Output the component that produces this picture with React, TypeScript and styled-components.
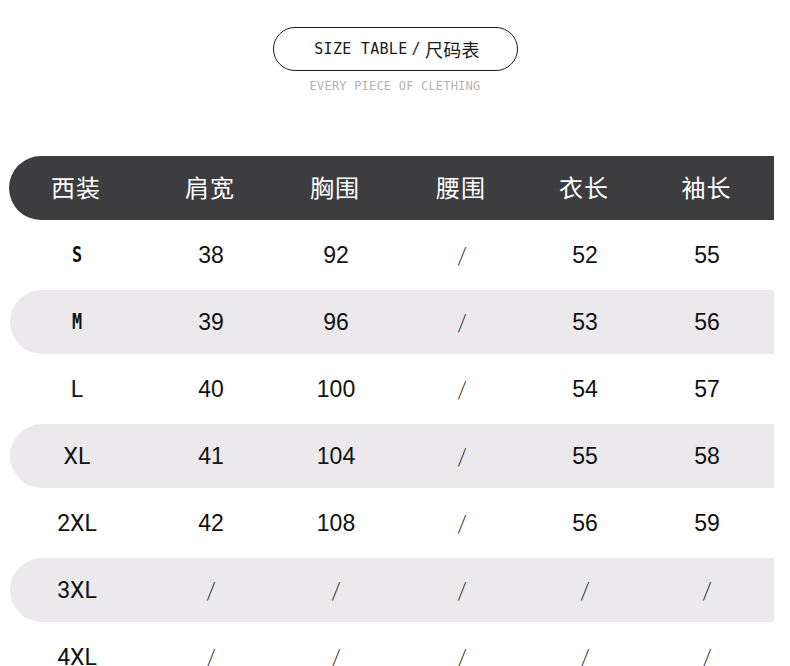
import React from "react";
import styled, { createGlobalStyle } from "styled-components";

const Global = createGlobalStyle`
  html, body { margin: 0; padding: 0; background: #ffffff; }
  body { font-family: "Liberation Sans", "Noto Sans CJK SC", sans-serif; }
`;

const Page = styled.div`
  width: 790px;
  height: 666px;
  overflow: hidden;
  display: flex;
  flex-direction: column;
  align-items: center;
  padding-top: 27px;
  box-sizing: border-box;
`;

const Pill = styled.div`
  flex-shrink: 0;
  width: 245px;
  height: 44px;
  box-sizing: border-box;
  border: 1.5px solid #1a1a1a;
  border-radius: 22px;
  display: flex;
  align-items: center;
  justify-content: center;
  gap: 4px;
  padding-left: 4px;
  font-family: "DejaVu Sans Mono", "Noto Sans CJK SC", monospace;
  font-size: 15px;
  color: #1a1a1a;
  letter-spacing: 0.3px;
`;

const PillCJK = styled.span`
  font-family: "Noto Sans CJK SC", sans-serif;
  font-size: 18px;
`;

const Subtitle = styled.div`
  flex-shrink: 0;
  margin-top: 8px;
  font-family: "DejaVu Sans Mono", monospace;
  font-size: 12px;
  line-height: 14px;
  color: #b3b3b3;
  letter-spacing: 0.2px;
`;

const Table = styled.div`
  flex-shrink: 0;
  align-self: flex-start;
  margin-top: 63px;
  margin-left: 9px;
  width: 765px;
  display: flex;
  flex-direction: column;
  gap: 3px;
`;

const Row = styled.div<{ $variant: "head" | "grey" | "white" }>`
  height: 64px;
  flex-shrink: 0;
  display: grid;
  grid-template-columns: 134px 134px 116px 136px 110px 1fr;
  align-items: center;
  border-radius: 32px 0 0 32px;
  background: ${(p) =>
    p.$variant === "head" ? "#3d3d3f" : p.$variant === "grey" ? "#ebe9ec" : "transparent"};
  margin-left: ${(p) => (p.$variant === "head" ? "0" : "1px")};
`;

const HeadCell = styled.div`
  text-align: center;
  font-family: "Noto Sans CJK SC", sans-serif;
  font-size: 24px;
  color: #ffffff;
  letter-spacing: 1px;
  padding-bottom: 4px;
`;

const SizeCell = styled.div<{ $mono: boolean }>`
  text-align: center;
  color: #111111;
  font-family: ${(p) => (p.$mono ? '"DejaVu Sans Mono", monospace' : 'Roboto, "Liberation Sans", sans-serif')};
  font-weight: ${(p) => (p.$mono ? 700 : 400)};
  font-size: ${(p) => (p.$mono ? "21px" : "23px")};
  transform: ${(p) => (p.$mono ? "scaleX(0.8)" : "none")};
`;

const ValueCell = styled.div`
  text-align: center;
  color: #111111;
  font-family: "Liberation Sans", sans-serif;
  font-size: 23px;
`;

const Slash = styled.div`
  text-align: center;
  color: #111111;
  font-family: Lato, sans-serif;
  font-weight: 300;
  font-size: 23px;
`;

const headers = ["西装", "肩宽", "胸围", "腰围", "衣长", "袖长"];

const rows: { size: string; mono: boolean; values: (string | null)[] }[] = [
  { size: "S", mono: true, values: ["38", "92", null, "52", "55"] },
  { size: "M", mono: true, values: ["39", "96", null, "53", "56"] },
  { size: "L", mono: false, values: ["40", "100", null, "54", "57"] },
  { size: "XL", mono: false, values: ["41", "104", null, "55", "58"] },
  { size: "2XL", mono: false, values: ["42", "108", null, "56", "59"] },
  { size: "3XL", mono: false, values: [null, null, null, null, null] },
  { size: "4XL", mono: false, values: [null, null, null, null, null] },
];

export default function App() {
  return (
    <>
      <Global />
      <Page>
        <Pill>
          <span>SIZE TABLE</span>
          <span>/</span>
          <PillCJK>尺码表</PillCJK>
        </Pill>
        <Subtitle>EVERY PIECE OF CLETHING</Subtitle>
        <Table>
          <Row $variant="head">
            {headers.map((h) => (
              <HeadCell key={h}>{h}</HeadCell>
            ))}
          </Row>
          {rows.map((r, i) => (
            <Row key={r.size} $variant={i % 2 === 1 ? "grey" : "white"}>
              <SizeCell $mono={r.mono}>{r.size}</SizeCell>
              {r.values.map((v, j) =>
                v === null ? <Slash key={j}>/</Slash> : <ValueCell key={j}>{v}</ValueCell>
              )}
            </Row>
          ))}
        </Table>
      </Page>
    </>
  );
}
